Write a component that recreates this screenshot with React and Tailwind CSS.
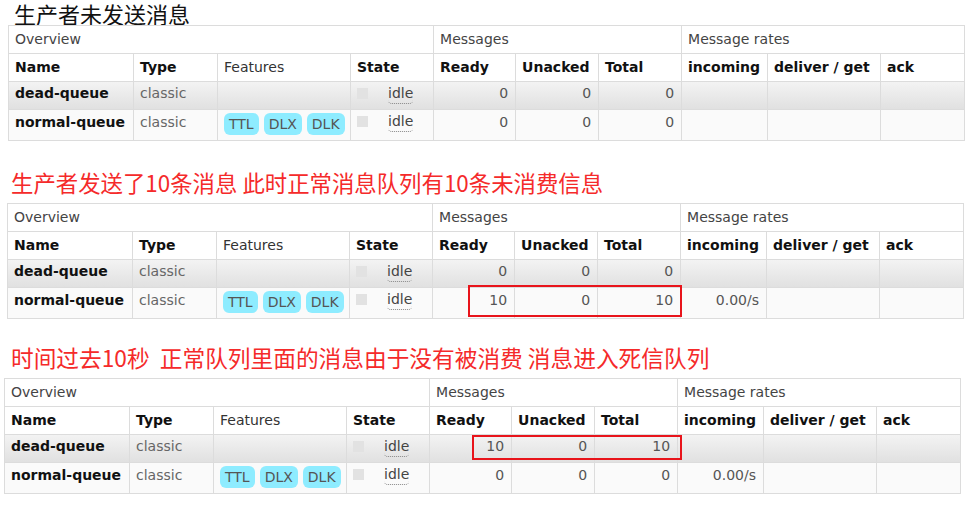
import React from 'react';

const font = { fontFamily: '"DejaVu Sans", Verdana, sans-serif' };

const Badge = ({ children }) => (
  <span className="inline-block h-[22px] px-[5px] rounded-[6px] bg-[#8eecff] text-[#555] leading-[22px]">
    {children}
  </span>
);

const State = () => (
  <div className="flex items-start">
    <span className="mt-[3px] w-[11px] h-[11px] bg-[#e2e2e2]" />
    <span className="ml-[20px] leading-[17px] border-b border-dotted border-[#888] rounded-b-[4px] pb-[1px]">idle</span>
  </div>
);

const cell = 'border border-[#dcdcdc] px-[6px]';
const num = 'border border-[#dcdcdc] pr-[7px] text-right align-top text-[#555]';

const Row = ({ name, dead, ready, unacked, total, rate }) => {
  const pt = dead ? 'pt-[3px]' : 'pt-[4px]';
  return (
    <tr className={dead ? 'bg-gradient-to-b from-[#f3f3f3] to-[#e0e0e0]' : 'bg-[#fafafa]'}>
      <td className={`${cell} align-top ${pt} font-bold text-[#111] ${dead ? 'h-[28px]' : 'h-[31px]'}`}>{name}</td>
      <td className={`${cell} align-top ${pt} text-[#666]`}>classic</td>
      <td className={`${cell} align-top pt-[3px]`}>
        {!dead && (
          <div className="flex gap-[5px]">
            <Badge>TTL</Badge>
            <Badge>DLX</Badge>
            <Badge>DLK</Badge>
          </div>
        )}
      </td>
      <td className={`${cell} align-top pt-[3px] text-[#444]`}>
        <State />
      </td>
      <td className={`${num} ${pt}`}>{ready}</td>
      <td className={`${num} ${pt}`}>{unacked}</td>
      <td className={`${num} ${pt}`}>{total}</td>
      <td className={`${num} ${pt}`}>{rate}</td>
      <td className={cell}></td>
      <td className={cell}></td>
    </tr>
  );
};

const QueueTable = ({ rows, box, className }) => (
  <div className={`relative w-[956px] ${className}`}>
    <table className="table-fixed w-[956px] text-[14px] leading-[17px] border border-[#d0d0d0]" style={font}>
      <colgroup>
        <col className="w-[125px]" />
        <col className="w-[84px]" />
        <col className="w-[133px]" />
        <col className="w-[83px]" />
        <col className="w-[82px]" />
        <col className="w-[83px]" />
        <col className="w-[83px]" />
        <col className="w-[86px]" />
        <col className="w-[113px]" />
        <col className="w-[84px]" />
      </colgroup>
      <thead>
        <tr className="bg-white text-[#444]">
          <td colSpan={4} className={`${cell} h-[28px]`}>Overview</td>
          <td colSpan={3} className={cell}>Messages</td>
          <td colSpan={3} className={cell}>Message rates</td>
        </tr>
        <tr className="bg-white font-bold text-[#111]">
          <td className={`${cell} h-[28px]`}>Name</td>
          <td className={cell}>Type</td>
          <td className={`${cell} font-normal text-[#333]`}>Features</td>
          <td className={cell}>State</td>
          <td className={cell}>Ready</td>
          <td className={cell}>Unacked</td>
          <td className={cell}>Total</td>
          <td className={cell}>incoming</td>
          <td className={cell}>deliver / get</td>
          <td className={cell}>ack</td>
        </tr>
      </thead>
      <tbody>
        {rows.map((r) => (
          <Row key={r.name} {...r} />
        ))}
      </tbody>
    </table>
    {box}
  </div>
);

const titleFont = { fontFamily: '"Microsoft YaHei", "Noto Sans CJK SC", sans-serif' };

export default function App() {
  return (
    <div className="w-[971px] h-[511px] bg-white">
      <div className="h-[25px] pl-[14px] pt-[1px] text-[22px] leading-[25px] text-[#111]" style={titleFont}>
        生产者未发送消息
      </div>
      <QueueTable
        className="ml-[8px]"
        rows={[
          { name: 'dead-queue', dead: true, ready: 0, unacked: 0, total: 0, rate: '' },
          { name: 'normal-queue', ready: 0, unacked: 0, total: 0, rate: '' },
        ]}
      />

      <div className="h-[62px] flex items-end pb-[8px] pl-[11px]">
        <span className="text-[22.4px] leading-[26px] text-[#f52a2a]" style={titleFont}>
          生产者发送了10条消息 此时正常消息队列有10条未消费信息
        </span>
      </div>
      <QueueTable
        className="ml-[7px]"
        rows={[
          { name: 'dead-queue', dead: true, ready: 0, unacked: 0, total: 0, rate: '' },
          { name: 'normal-queue', ready: 10, unacked: 0, total: 10, rate: '0.00/s' },
        ]}
        box={<div className="absolute left-[461px] top-[82px] w-[214px] h-[32px] border-2 border-[#e8141b]" />}
      />

      <div className="h-[59px] flex items-end pb-[7px] pl-[11px]">
        <span className="text-[22.7px] leading-[26px] text-[#f52a2a] whitespace-pre" style={titleFont}>
          时间过去10秒  正常队列里面的消息由于没有被消费 消息进入死信队列
        </span>
      </div>
      <QueueTable
        className="ml-[4px]"
        rows={[
          { name: 'dead-queue', dead: true, ready: 10, unacked: 0, total: 10, rate: '' },
          { name: 'normal-queue', ready: 0, unacked: 0, total: 0, rate: '0.00/s' },
        ]}
        box={<div className="absolute left-[468px] top-[57px] w-[210px] h-[25px] border-2 border-[#e8141b]" />}
      />
    </div>
  );
}
